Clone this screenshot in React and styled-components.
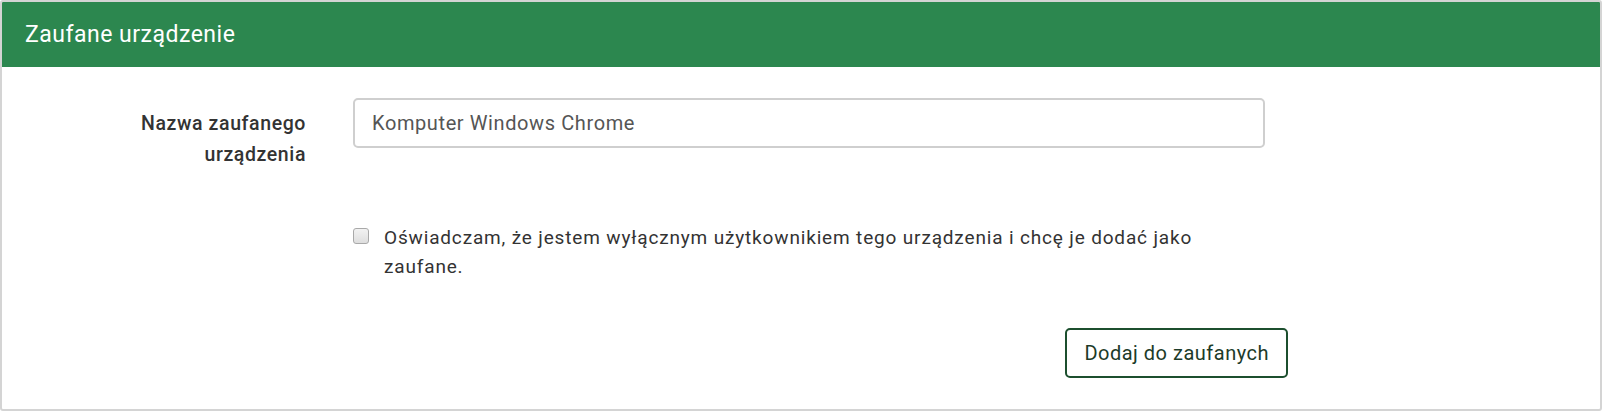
// Zaufane urządzenie - formularz dodania urządzenia
import { useState } from "react";
import styled, { createGlobalStyle } from "styled-components";

const GlobalStyle = createGlobalStyle`
  body {
    margin: 0;
    background: #fff;
    font-family: Roboto, "Liberation Sans", sans-serif;
    color: #333;
  }
`;

const Panel = styled.div`
  width: 1602px;
  height: 411px;
  box-sizing: border-box;
  border: 2px solid #d4d4d4;
  border-radius: 3px;
  background: #fff;
  overflow: hidden;
`;

const PanelHeading = styled.div`
  height: 65px;
  display: flex;
  align-items: center;
  padding: 0 23px;
  background-color: #2c874f;
  color: #fff;
  font-size: 23px;
  letter-spacing: 0.5px;
`;

const PanelBody = styled.div`
  padding-top: 31px;
  width: 1286px;
`;

const FormRow = styled.div`
  display: grid;
  grid-template-columns: 304px 1fr;
  column-gap: 47px;
  margin-bottom: ${(p) => p.$gap || 0}px;
`;

const Label = styled.label`
  padding-top: 10px;
  text-align: right;
  font-size: 19.5px;
  font-weight: 500;
  letter-spacing: 0.6px;
  line-height: 31px;
  color: #333;
`;

const TextInput = styled.input`
  width: 912px;
  height: 50px;
  box-sizing: border-box;
  border: 2px solid #cfcfcf;
  border-radius: 5px;
  padding: 0 17px;
  font-family: Roboto, "Liberation Sans", sans-serif;
  font-size: 20px;
  letter-spacing: 0.6px;
  color: #555;
  outline: none;
`;

const CheckLabel = styled.label`
  display: flex;
  align-items: flex-start;
  gap: 15px;
  max-width: 885px;
  font-size: 19px;
  letter-spacing: 0.84px;
  line-height: 28.5px;
  color: #333;
  cursor: pointer;
`;

const CheckBox = styled.span`
  flex: none;
  width: 14px;
  height: 14px;
  margin-top: 4px;
  border: 1px solid #a9a9a9;
  border-radius: 3px;
  background: linear-gradient(#f2f2f2, #dedede);
`;

const ButtonRow = styled.div`
  display: flex;
  justify-content: flex-end;
`;

const Button = styled.button`
  height: 50px;
  box-sizing: border-box;
  padding: 0 17px;
  border: 2px solid #1c4f2e;
  border-radius: 5px;
  background: #fff;
  font-family: Roboto, "Liberation Sans", sans-serif;
  font-size: 20px;
  letter-spacing: 0.5px;
  color: #1d3b29;
  cursor: pointer;
`;

const App = () => {
  const [name, setName] = useState("Komputer Windows Chrome");
  const [agree, setAgree] = useState(false);

  return (
    <>
      <GlobalStyle />
      <Panel>
        <PanelHeading>Zaufane urządzenie</PanelHeading>
        <PanelBody>
          <FormRow $gap={54}>
            <Label htmlFor="device">
              Nazwa zaufanego
              <br />
              urządzenia
            </Label>
            <TextInput
              id="device"
              value={name}
              onChange={(e) => setName(e.target.value)}
            />
          </FormRow>
          <FormRow $gap={47}>
            <div />
            <CheckLabel onClick={() => setAgree(!agree)}>
              <CheckBox />
              <span>
                Oświadczam, że jestem wyłącznym użytkownikiem tego urządzenia i
                chcę je dodać jako zaufane.
              </span>
            </CheckLabel>
          </FormRow>
          <ButtonRow>
            <Button>Dodaj do zaufanych</Button>
          </ButtonRow>
        </PanelBody>
      </Panel>
    </>
  );
};

export default App;
